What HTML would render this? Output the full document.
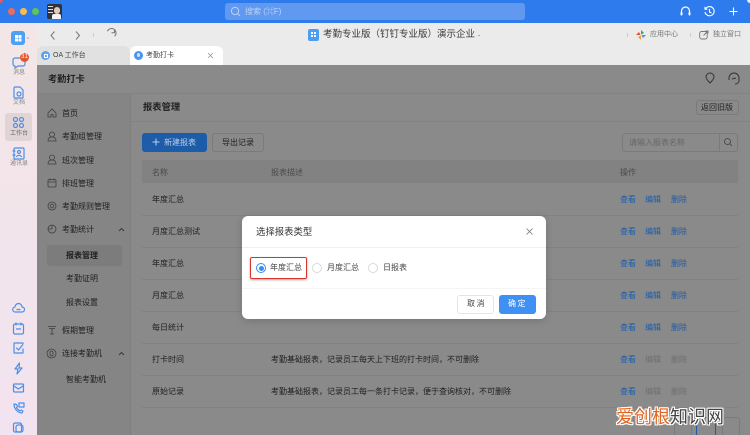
<!DOCTYPE html>
<html lang="zh"><head><meta charset="utf-8"><style>
html,body{margin:0;padding:0;width:750px;height:435px;overflow:hidden;background:#8a8a8a}
#r{position:relative;width:750px;height:435px;overflow:hidden;font-family:"Liberation Sans","Noto Sans CJK SC",sans-serif;font-size:8px;color:#1f1f1f;filter:blur(.35px)}
#r div,#r span,#r svg{position:absolute;white-space:nowrap}
.t{line-height:12px}
.l{height:1px;background:#828282;left:142px;width:596px}
.b{color:#1d5ca8}.g{color:#6e6e6e}
.s{fill:none;stroke:#4b8fe8;stroke-width:1.2;stroke-linecap:round;stroke-linejoin:round}
.n{fill:none;stroke:#3f3f3f;stroke-width:.8}
</style></head><body><div id="r">
<div style="left:0;top:0;width:750px;height:23px;background:#2e7bee"></div>
<div style="left:0;top:0;width:3px;height:3px;background:#d9605c;border-radius:0 0 3px 0"></div>
<div style="left:747px;top:0;width:3px;height:3px;background:#e8eefa;border-radius:0 0 0 3px"></div>
<div style="left:0;top:23px;width:37px;height:412px;background:linear-gradient(#f3e6e6,#f2e3f0)"></div>
<div style="left:37px;top:23px;width:713px;height:43px;background:#ebebeb"></div>
<div style="left:37px;top:65px;width:713px;height:370px;background:#8a8a8a"></div>
<div style="left:37px;top:93px;width:93px;height:342px;background:#858585"></div>
<div style="left:130px;top:93px;width:1px;height:342px;background:#7f7f7f"></div>
<div style="left:37px;top:93px;width:713px;height:1px;background:#828282"></div>
<div style="left:131px;top:121px;width:619px;height:1px;background:#828282"></div>
<!-- traffic -->
<div style="left:8px;top:8px;width:7px;height:7px;border-radius:50%;background:#ec6a5e"></div>
<div style="left:20px;top:8px;width:7px;height:7px;border-radius:50%;background:#f4bd4f"></div>
<div style="left:32px;top:8px;width:7px;height:7px;border-radius:50%;background:#61c454"></div>
<div style="left:47px;top:4px;width:15px;height:15px;background:#30323c;border-radius:2px"></div>
<div style="left:54px;top:7px;width:6px;height:7px;background:#e3c9b8;border-radius:3px"></div>
<div style="left:52px;top:14px;width:9px;height:5px;background:#f2f2f2;border-radius:2px 2px 0 0"></div>
<div style="left:48px;top:6px;width:5px;height:1px;background:#ddd"></div>
<div style="left:48px;top:9px;width:5px;height:1px;background:#ddd"></div>
<div style="left:48px;top:12px;width:5px;height:1px;background:#ddd"></div>
<!-- search -->
<div style="left:225px;top:3px;width:300px;height:17px;background:#6199f0;border-radius:3px"></div>
<svg style="left:230px;top:6px" width="11" height="11" viewBox="0 0 11 11"><circle cx="5" cy="5" r="3.6" fill="none" stroke="#bcd4f8"/><path d="M8 8l2 2" stroke="#bcd4f8"/></svg>
<div class="t" style="left:245px;top:6px;color:#bcd4f8">搜索 (⌘F)</div>
<svg style="left:679px;top:5px" width="13" height="13" viewBox="0 0 13 13"><path d="M2.5 8V6a4 4 0 018 0v2" fill="none" stroke="#fff" stroke-width="1.2"/><rect x="1.5" y="7" width="2" height="3.5" rx="1" fill="#fff"/><rect x="9.5" y="7" width="2" height="3.5" rx="1" fill="#fff"/></svg>
<svg style="left:703px;top:5px" width="13" height="13" viewBox="0 0 13 13"><path d="M2.6 3.8A4.6 4.6 0 112 7" fill="none" stroke="#fff" stroke-width="1.1"/><path d="M2 1.8v2.4h2.4M6.5 4v3l2 1" fill="none" stroke="#fff" stroke-width="1.1"/></svg>
<svg style="left:728px;top:6px" width="11" height="11" viewBox="0 0 11 11"><path d="M5.5 1.5v8M1.5 5.5h8" stroke="#fff" stroke-width="1.1"/></svg>
<!-- toolbar -->
<svg style="left:48px;top:29px" width="60" height="13" viewBox="0 0 60 13"><path d="M6.5 2.5l-3.500 4 3.500 4M28 2.500l3.500 4-3.500 4" fill="none" stroke="#777" stroke-width="1"/></svg>
<div style="left:93px;top:33px;width:1px;height:4px;background:#ccc"></div>
<svg style="left:104px;top:28px" width="13" height="13" viewBox="0 0 13 13"><path d="M10.500 4.500A4.500 4.500 0 102 6.800" fill="none" stroke="#777" stroke-width="1" transform="rotate(50 6.500 6.500)"/><path d="M10.500 1.800v3h-3" fill="none" stroke="#777" stroke-width="1"/></svg>
<div style="left:308px;top:29px;width:11px;height:12px;background:#4d9df0;border-radius:2px"></div>
<div style="left:311px;top:32px;width:2px;height:2px;background:#fff;box-shadow:3px 0 #fff,0 3px #fff,3px 3px #fff"></div>
<div class="t" style="left:323px;top:29px;font-size:9.500px;line-height:12px;color:#3a3a3a">考勤专业版（钉钉专业版）演示企业</div>
<div style="left:478px;top:35px;width:2px;height:1px;background:#aaa"></div>
<div style="left:627px;top:33px;width:1px;height:4px;background:#ccc"></div>
<div style="left:690px;top:33px;width:1px;height:4px;background:#ccc"></div>
<svg style="left:636px;top:30px" width="10" height="10" viewBox="0 0 10 10"><path d="M5 0L8 3 5 4.500z" fill="#3fa35a"/><path d="M10 5L7 8 5.500 5z" fill="#4b8fe8"/><path d="M5 10L2 7 5 5.500z" fill="#e8a03a"/><path d="M0 5L3 2 4.500 5z" fill="#e0503c"/></svg>
<div class="t" style="left:650px;top:29px;color:#777;font-size:7px">应用中心</div>
<svg style="left:699px;top:30px" width="10" height="10" viewBox="0 0 10 10"><rect x=".7" y="1.500" width="7.500" height="7.500" rx="2" fill="none" stroke="#777" stroke-width=".9"/><path d="M4.500 5.500L9 1M6.500 1H9v2.500" fill="none" stroke="#777" stroke-width=".9"/></svg>
<div class="t" style="left:713px;top:29px;color:#777;font-size:7px">独立窗口</div>
<!-- tabs -->
<div style="left:37px;top:46px;width:93px;height:19px;background:#e1e1e1;border-radius:6px 6px 0 0"></div>
<div style="left:130px;top:46px;width:93px;height:19px;background:#fff;border-radius:6px 6px 0 0"></div>
<div style="left:41px;top:51px;width:9px;height:9px;border-radius:50%;background:#5da3ee"></div>
<div style="left:44px;top:54px;width:2px;height:2px;border:.8px solid #fff"></div>
<div class="t" style="left:53px;top:50px;color:#444;font-size:7px">OA 工作台</div>
<div style="left:134px;top:51px;width:9px;height:9px;border-radius:50%;background:#4d94ee"></div>
<div style="left:137px;top:53px;width:3px;height:4px;border-radius:50%;background:#cfe2fb"></div>
<div class="t" style="left:146px;top:50px;color:#444;font-size:7px">考勤打卡</div>
<svg style="left:207px;top:52px" width="7" height="7" viewBox="0 0 7 7"><path d="M1 1l5 5M6 1L1 6" stroke="#999" stroke-width=".8"/></svg>
<!-- sidebar -->
<div style="left:11px;top:31px;width:14px;height:14px;border-radius:3px;background:#4da0f2"></div>
<div style="left:15px;top:35px;width:2.500px;height:2.500px;background:#fff;box-shadow:3.500px 0 #fff,0 3.500px #fff,3.500px 3.500px #fff"></div>
<div style="left:27px;top:37px;width:2px;height:2px;border-radius:50%;background:#c5bcbc"></div>
<svg style="left:12px;top:56px" width="14" height="13" viewBox="0 0 14 13"><path class="s" d="M3 2h8a2 2 0 012 2v4a2 2 0 01-2 2H6l-3 2v-2a2 2 0 01-2-2V4a2 2 0 012-2z"/></svg>
<div style="left:20px;top:53px;width:9px;height:9px;border-radius:50%;background:#e2562d;color:#fff;font-size:6px;line-height:9px;text-align:center">31</div>
<div class="t" style="left:13px;top:67px;font-size:6px;color:#888">消息</div>
<svg style="left:12px;top:86px" width="13" height="13" viewBox="0 0 13 13"><path class="s" d="M3 1h5l3 3v7a1 1 0 01-1 1H3a1 1 0 01-1-1V2a1 1 0 011-1z"/><circle class="s" cx="7" cy="8" r="2"/></svg>
<div class="t" style="left:13px;top:97px;font-size:6px;color:#888">文档</div>
<div style="left:5px;top:113px;width:27px;height:28px;background:#e0d4d6;border-radius:3px"></div>
<svg style="left:12px;top:116px" width="13" height="13" viewBox="0 0 13 13"><circle class="s" cx="3.500" cy="3.500" r="2"/><circle class="s" cx="9.500" cy="3.500" r="2"/><circle class="s" cx="3.500" cy="9.500" r="2"/><circle class="s" cx="9.500" cy="9.500" r="2"/></svg>
<div class="t" style="left:10px;top:128px;font-size:6px;color:#666">工作台</div>
<svg style="left:12px;top:147px" width="13" height="13" viewBox="0 0 13 13"><rect class="s" x="2" y="1" width="10" height="11" rx="1"/><circle class="s" cx="7" cy="5" r="1.500"/><path class="s" d="M4.500 9.500c1.500-1.500 3.500-1.500 5 0M1 4h2M1 8h2"/></svg>
<div class="t" style="left:10px;top:158px;font-size:6px;color:#888">通讯录</div>
<svg style="left:12px;top:301px" width="13" height="134" viewBox="0 0 13 134">
<path class="s" d="M3.500 11a2.500 2.500 0 01-.5-5A3.500 3.500 0 0110 6a2.500 2.500 0 010 5zM5 8.500h3"/>
<rect class="s" x="1.500" y="23" width="10" height="10" rx="1.500"/><path class="s" d="M4 22v2M9 22v2M4.500 28h4"/>
<path class="s" d="M11 43v-1H2v10h9v-4M4.500 47l2 2 4-5"/>
<path class="s" d="M7.500 62L3 68h3l-1 5 5-6H7z"/>
<rect class="s" x="1.500" y="83" width="10" height="8" rx="1"/><path class="s" d="M2 85l4.500 3L11 85"/>
<path class="s" d="M2 103c0 5 4 9 8 9l1-2-2-1-1 1c-1.500-1-3-2-3.500-3.500l1-1-1-2zM7 102h5v4H7z"/>
<rect class="s" x="1.500" y="122" width="8" height="9" rx="1.500"/><rect class="s" x="4" y="124" width="7" height="7" rx="2"/>
</svg>
<!-- header -->
<div class="t" style="left:48px;top:73px;font-size:9.200px;color:#222;font-weight:700">考勤打卡</div>
<svg style="left:704px;top:72px" width="36" height="14" viewBox="0 0 36 14"><path class="n" style="stroke:#333;stroke-width:1" d="M6 11C3.500 8.500 2 6.500 2 5a4 4 0 018 0c0 1.500-1.500 3.500-4 6z"/><path class="n" style="stroke:#333;stroke-width:1" d="M25 8V6a5 5 0 0110 0v3a4 4 0 01-4 3M28 7l4-1"/></svg>
<!-- nav -->
<svg style="left:47px;top:108px" width="10" height="10" viewBox="0 0 10 10"><path class="n" d="M1 5l4-4 4 4v4H6V6.500H4V9H1z"/></svg>
<div class="t" style="left:62px;top:108px">首页</div>
<svg style="left:47px;top:131px" width="10" height="11" viewBox="0 0 10 11"><circle class="n" cx="5" cy="3.500" r="2.500"/><path class="n" d="M1 10c0-3 2-4 4-4s4 1 4 4z"/></svg>
<div class="t" style="left:62px;top:131px">考勤组管理</div>
<svg style="left:47px;top:154px" width="10" height="11" viewBox="0 0 10 11"><circle class="n" cx="5" cy="3.500" r="2.500"/><path class="n" d="M1 10c0-3 2-4 4-4s4 1 4 4z"/></svg>
<div class="t" style="left:62px;top:155px">班次管理</div>
<svg style="left:47px;top:178px" width="10" height="10" viewBox="0 0 10 10"><rect class="n" x="1" y="1.500" width="8" height="7.500" rx="1"/><path class="n" d="M1 4h8M3 .5v2M7 .5v2"/></svg>
<div class="t" style="left:62px;top:178px">排班管理</div>
<svg style="left:47px;top:201px" width="10" height="10" viewBox="0 0 10 10"><circle class="n" cx="5" cy="5" r="4"/><circle class="n" cx="5" cy="5" r="1.800"/></svg>
<div class="t" style="left:62px;top:201px">考勤规则管理</div>
<svg style="left:47px;top:224px" width="10" height="10" viewBox="0 0 10 10"><circle class="n" cx="5" cy="5" r="4"/><path class="n" d="M5 1v4H1"/></svg>
<div class="t" style="left:62px;top:224px">考勤统计</div>
<svg style="left:118px;top:227px" width="7" height="5" viewBox="0 0 7 5"><path d="M1 4l2.500-2.500L6 4" fill="none" stroke="#333" stroke-width=".9"/></svg>
<div style="left:47px;top:245px;width:75px;height:21px;background:#7c7c7c;border-radius:3px"></div>
<div class="t" style="left:66px;top:250px;font-weight:700;color:#1f1f1f">报表管理</div>
<div class="t" style="left:66px;top:273px">考勤证明</div>
<div class="t" style="left:66px;top:297px">报表设置</div>
<svg style="left:47px;top:325px" width="10" height="10" viewBox="0 0 10 10"><path class="n" d="M1 1.500h8M2 3.500h6M5 3.500V9M3 9h4"/></svg>
<div class="t" style="left:62px;top:325px">假期管理</div>
<svg style="left:46px;top:348px" width="11" height="11" viewBox="0 0 11 11"><circle class="n" cx="5.500" cy="5.500" r="4.500"/><rect class="n" x="4" y="3" width="3" height="5" rx="1.500"/></svg>
<div class="t" style="left:62px;top:348px">连接考勤机</div>
<svg style="left:118px;top:351px" width="7" height="5" viewBox="0 0 7 5"><path d="M1 4l2.500-2.500L6 4" fill="none" stroke="#333" stroke-width=".9"/></svg>
<div class="t" style="left:66px;top:374px">智能考勤机</div>
<!-- main -->
<div class="t" style="left:143px;top:101px;font-size:9.300px;font-weight:700;color:#222">报表管理</div>
<div class="t" style="left:701px;top:102px;color:#222">返回旧版</div>
<div style="left:696px;top:100px;width:41px;height:13px;border:1px solid #7b7b7b;border-radius:3px"></div>
<div style="left:142px;top:133px;width:65px;height:19px;background:#1d5ca8;border-radius:3px"></div>
<svg style="left:152px;top:138px" width="8" height="8" viewBox="0 0 8 8"><path d="M4 .5v7M.5 4h7" stroke="#bcd0ea" stroke-width="1"/></svg>
<div class="t" style="left:164px;top:137px;color:#bcd0ea">新建报表</div>
<div style="left:212px;top:133px;width:50px;height:17px;border:1px solid #7b7b7b;border-radius:3px"></div>
<div class="t" style="left:222px;top:137px">导出记录</div>
<div style="left:622px;top:133px;width:114px;height:17px;border:1px solid #7b7b7b;border-radius:3px"></div>
<div style="left:719px;top:134px;width:1px;height:17px;background:#7b7b7b"></div>
<div class="t" style="left:629px;top:137px;color:#666">请输入报表名称</div>
<svg style="left:723px;top:137px" width="10" height="10" viewBox="0 0 10 10"><circle class="n" cx="4.500" cy="4.500" r="3"/><path class="n" d="M7 7l2 2"/></svg>
<div style="left:142px;top:160px;width:596px;height:23px;background:#828282"></div>
<div class="t g" style="left:152px;top:167px;color:#4a4a4a">名称</div>
<div class="t g" style="left:271px;top:167px;color:#4a4a4a">报表描述</div>
<div class="t g" style="left:620px;top:167px;color:#4a4a4a">操作</div>
<div class="t" style="left:152px;top:194px">年度汇总</div><div class="l" style="top:215px"></div>
<div class="t" style="left:152px;top:226px">月度汇总测试</div><div class="l" style="top:247px"></div>
<div class="t" style="left:152px;top:258px">年度汇总</div><div class="l" style="top:279px"></div>
<div class="t" style="left:152px;top:290px">月度汇总</div><div class="l" style="top:311px"></div>
<div class="t" style="left:152px;top:322px">每日统计</div><div class="l" style="top:343px"></div>
<div class="t" style="left:152px;top:354px">打卡时间</div><div class="l" style="top:375px"></div>
<div class="t" style="left:152px;top:386px">原始记录</div><div class="l" style="top:407px"></div>
<div class="t" style="left:271px;top:354px">考勤基础报表，记录员工每天上下班的打卡时间，不可删除</div>
<div class="t" style="left:271px;top:386px">考勤基础报表，记录员工每一条打卡记录，便于查询核对，不可删除</div>
<div class="t b" style="left:620px;top:194px">查看</div><div class="t b" style="left:645px;top:194px">编辑</div><div class="t b" style="left:671px;top:194px">删除</div>
<div class="t b" style="left:620px;top:226px">查看</div><div class="t b" style="left:645px;top:226px">编辑</div><div class="t b" style="left:671px;top:226px">删除</div>
<div class="t b" style="left:620px;top:258px">查看</div><div class="t b" style="left:645px;top:258px">编辑</div><div class="t b" style="left:671px;top:258px">删除</div>
<div class="t b" style="left:620px;top:290px">查看</div><div class="t b" style="left:645px;top:290px">编辑</div><div class="t b" style="left:671px;top:290px">删除</div>
<div class="t b" style="left:620px;top:322px">查看</div><div class="t b" style="left:645px;top:322px">编辑</div><div class="t b" style="left:671px;top:322px">删除</div>
<div class="t b" style="left:620px;top:354px">查看</div><div class="t g" style="left:645px;top:354px">编辑</div><div class="t g" style="left:671px;top:354px">删除</div>
<div class="t b" style="left:620px;top:386px">查看</div><div class="t g" style="left:645px;top:386px">编辑</div><div class="t g" style="left:671px;top:386px">删除</div>
<!-- pagination -->
<div style="left:674px;top:417px;width:16px;height:18px;border:1px solid #7b7b7b;border-radius:3px"></div>
<div style="left:696px;top:417px;width:18px;height:18px;border:1px solid #1d5ca8;border-radius:3px"></div>
<div style="left:722px;top:417px;width:16px;height:18px;border:1px solid #7b7b7b;border-radius:3px"></div>
<!-- dialog -->
<div style="left:242px;top:216px;width:304px;height:103px;background:#fff;border-radius:6px;box-shadow:0 2px 8px rgba(0,0,0,.15)"></div>
<div class="t" style="left:256px;top:226px;font-size:9.400px;color:#333">选择报表类型</div>
<svg style="left:525px;top:227px" width="9" height="9" viewBox="0 0 9 9"><path d="M1.500 1.500l6 6M7.500 1.500l-6 6" stroke="#777" stroke-width=".8"/></svg>
<div style="left:242px;top:247px;width:304px;height:1px;background:#f0f0f0"></div>
<div style="left:249.500px;top:257px;width:55px;height:19.500px;border:1.500px solid #d9342b;border-radius:2px;box-shadow:0 1px 2px rgba(0,0,0,.35)"></div>
<div style="left:256px;top:263px;width:8px;height:8px;border:1px solid #3b8cf0;border-radius:50%"></div>
<div style="left:258.500px;top:265.500px;width:5px;height:5px;background:#3b8cf0;border-radius:50%"></div>
<div class="t" style="left:270px;top:262px;color:#444">年度汇总</div>
<div style="left:312px;top:263px;width:8px;height:8px;border:1px solid #d9d9d9;border-radius:50%"></div>
<div class="t" style="left:327px;top:262px;color:#444">月度汇总</div>
<div style="left:368px;top:263px;width:8px;height:8px;border:1px solid #d9d9d9;border-radius:50%"></div>
<div class="t" style="left:383px;top:262px;color:#444">日报表</div>
<div style="left:242px;top:288px;width:304px;height:1px;background:#f5f5f5"></div>
<div style="left:457px;top:295px;width:35px;height:17px;border:1px solid #e4e4e4;border-radius:3px;background:#fff"></div>
<div class="t" style="left:467px;top:298px;letter-spacing:1.500px;color:#444">取消</div>
<div style="left:499px;top:295px;width:37px;height:19px;background:#3f8ff5;border-radius:3px"></div>
<div class="t" style="left:508px;top:298px;letter-spacing:1.500px;color:#fff">确定</div>
<!-- watermark -->
<div style="left:616px;top:405px;font-size:18px;line-height:24px;font-family:'Liberation Sans','Noto Sans CJK SC',sans-serif;font-weight:400;text-shadow:1px 0 #fff,-1px 0 #fff,0 1px #fff,0 -1px #fff,1px 1px #fff,-1px -1px #fff,1px -1px #fff,-1px 1px #fff"><span style="position:static;color:#e2641f">爱创根</span><span style="position:static;color:#444">知识网</span></div>
</div></body></html>
